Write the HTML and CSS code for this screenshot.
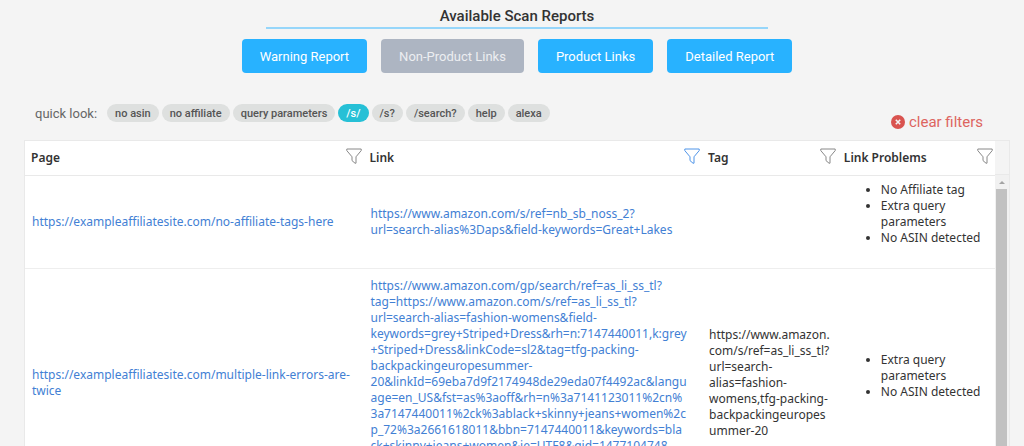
FILE: index.html
```html
<!DOCTYPE html>
<html lang="en">
<head>
<meta charset="utf-8">
<title>Available Scan Reports</title>
<meta name="viewport" content="width=device-width, initial-scale=1">
<link rel="stylesheet" href="styles.css">
</head>
<body>
<svg class="sprite" aria-hidden="true">
  <symbol id="funnel" viewBox="0 0 16 16"><path d="M.8 1h14.4v1.6L10 8.8v6.4h-1L6 12.6V8.800L.8 2.600z" fill="none" stroke="currentColor" stroke-linejoin="round"/></symbol>
</svg>
<main class="page">
  <h1 class="title">Available Scan Reports</h1>
  <nav class="reports" aria-label="Reports">
    <button class="report" type="button">Warning Report</button>
    <button class="report report-muted" type="button">Non-Product Links</button>
    <button class="report" type="button">Product Links</button>
    <button class="report" type="button">Detailed Report</button>
  </nav>
  <div class="toolbar">
    <div class="quick">
      <span class="quick-label">quick look:</span>
      <button class="chip" type="button">no asin</button>
      <button class="chip" type="button">no affiliate</button>
      <button class="chip" type="button">query parameters</button>
      <button class="chip chip-active" type="button">/s/</button>
      <button class="chip" type="button">/s?</button>
      <button class="chip" type="button">/search?</button>
      <button class="chip" type="button">help</button>
      <button class="chip" type="button">alexa</button>
    </div>
    <button class="clear" type="button">
      <svg class="clear-icon" viewBox="0 0 14 14" aria-hidden="true"><circle cx="7" cy="7" r="7" fill="#d9534f"/><path d="M4.800 4.800l4.400 4.400M9.200 4.800L4.800 9.200" stroke="#f4f4f4" stroke-width="1.600"/></svg>
      clear filters
    </button>
  </div>
  <div class="grid">
    <table class="table">
      <colgroup><col class="col-page"><col class="col-link"><col class="col-tag"><col></colgroup>
      <thead>
        <tr>
          <th scope="col"><div class="head"><span>Page</span><button class="filter" type="button" aria-label="Filter Page"><svg class="funnel"><use href="#funnel"/></svg></button></div></th>
          <th scope="col"><div class="head"><span>Link</span><button class="filter filter-on" type="button" aria-label="Filter Link"><svg class="funnel"><use href="#funnel"/></svg></button></div></th>
          <th scope="col"><div class="head"><span>Tag</span><button class="filter" type="button" aria-label="Filter Tag"><svg class="funnel"><use href="#funnel"/></svg></button></div></th>
          <th scope="col"><div class="head"><span>Link Problems</span><button class="filter" type="button" aria-label="Filter Link Problems"><svg class="funnel"><use href="#funnel"/></svg></button></div></th>
        </tr>
      </thead>
      <tbody>
        <tr>
          <td><a href="#">https://exampleaffiliatesite.com/no-affiliate-tags-here</a></td>
          <td><a href="#">https://www.amazon.com/s/ref=nb_sb_noss_2?<br>url=search-alias%3Daps&amp;field-keywords=Great+Lakes</a></td>
          <td></td>
          <td><ul class="problems"><li>No Affiliate tag</li><li>Extra query parameters</li><li>No ASIN detected</li></ul></td>
        </tr>
        <tr class="row-tall">
          <td><a href="#">https://exampleaffiliatesite.com/multiple-link-errors-are-<br>twice</a></td>
          <td class="cell-top"><a href="#">https://www.amazon.com/gp/search/ref=as_li_ss_tl?<br>tag=https://www.amazon.com/s/ref=as_li_ss_tl?<br>url=search-alias=fashion-womens&amp;field-<br>keywords=grey+Striped+Dress&amp;rh=n:7147440011,k:grey<br>+Striped+Dress&amp;linkCode=sl2&amp;tag=tfg-packing-<br>backpackingeuropesummer-<br>20&amp;linkId=69eba7d9f2174948de29eda07f4492ac&amp;langu<br>age=en_US&amp;fst=as%3aoff&amp;rh=n%3a7141123011%2cn%<br>3a7147440011%2ck%3ablack+skinny+jeans+women%2c<br>p_72%3a2661618011&amp;bbn=7147440011&amp;keywords=bla<br>ck+skinny+jeans+women&amp;ie=UTF8&amp;qid=1477104748</a></td>
          <td>https://www.amazon.<br>com/s/ref=as_li_ss_tl?<br>url=search-<br>alias=fashion-<br>womens,tfg-packing-<br>backpackingeuropes<br>ummer-20</td>
          <td><ul class="problems"><li>Extra query parameters</li><li>No ASIN detected</li></ul></td>
        </tr>
      </tbody>
    </table>
    <div class="scroll" aria-hidden="true">
      <div class="scroll-head"></div>
      <div class="scroll-up"></div>
      <div class="scroll-thumb"></div>
    </div>
  </div>
</main>
</body>
</html>
```
FILE: styles.css
```css
* { box-sizing: border-box; }
html, body { height: 100%; }
body {
  margin: 0;
  overflow: hidden;
  background: #f4f4f4;
  color: #333;
  font-family: Roboto, sans-serif;
}
button { border: 0; margin: 0; padding: 0; background: none; font: inherit; color: inherit; cursor: pointer; }
.sprite { display: none; }
.page { padding: 6px 14px 0 24px; }
.title {
  width: 51%;
  margin: 0 auto;
  padding-bottom: 1px;
  border-bottom: 2px solid #96d6fa;
  text-align: center;
  font-size: 15px;
  line-height: 20px;
  font-weight: 500;
}
.reports { display: flex; justify-content: center; gap: 14px; margin-top: 10px; }
.report {
  height: 34px;
  padding: 0 18px;
  border-radius: 4px;
  background: #28b2ff;
  color: #fff;
  font-size: 13px;
}
.report-muted { background: #adb5c2; color: #eceef1; }
.toolbar { display: flex; justify-content: space-between; align-items: flex-start; padding: 31px 27px 0 11px; height: 67px; }
.quick { display: flex; align-items: center; gap: 3px; }
.quick-label { margin-right: 7px; color: #666; font-size: 13px; }
.chip {
  height: 18px;
  padding: 0 8px;
  border-radius: 9px;
  background: #dee0df;
  color: #555;
  font-size: 11px;
  font-weight: 500;
}
.chip-active { background: #26c0d6; color: #fff; }
.clear { display: flex; align-items: center; gap: 4px; margin-top: 8px; color: #dd6460; font-size: 15px; line-height: 20px; }
.clear-icon { width: 14px; height: 14px; }
.grid { display: flex; border: 1px solid #e9e9e9; background: #fff; }
.table {
  flex: 1;
  min-width: 0;
  table-layout: fixed;
  border-collapse: collapse;
  font-family: "Noto Sans", "Open Sans", sans-serif;
  font-size: 12px;
  line-height: 16px;
}
.col-page, .col-link { width: 34.9%; }
.col-tag { width: 14%; }
th { height: 34px; padding: 0 2px 0 6px; border-bottom: 1px solid #e9e9e9; text-align: left; font-weight: 600; }
.head { display: flex; justify-content: space-between; align-items: center; white-space: nowrap; }
.filter { display: flex; margin-bottom: 4px; color: #888; }
.filter-on { color: #4f94e8; }
.funnel { width: 16px; height: 16px; }
td { height: 93px; padding: 6px 7px; border-bottom: 1px solid #eee; vertical-align: middle; white-space: nowrap; }
.row-tall td { height: 230px; }
.row-tall .cell-top { padding-top: 9px; vertical-align: top; }
td a { color: #4280d4; text-decoration: none; }
.problems { margin: 0 0 15px; padding-left: 36px; white-space: normal; }
.scroll { display: flex; flex-direction: column; width: 14px; background: #f1f1f1; }
.scroll-head { height: 34px; border-bottom: 1px solid #e9e9e9; background: #f4f4f4; }
.scroll-up {
  width: 6px;
  height: 3px;
  margin: 6px auto 5px 4px;
  background: #a3a3a3;
  clip-path: polygon(50% 0, 100% 100%, 0 100%);
}
.scroll-thumb { flex: 1; margin: 0 2px 0 1px; background: #c1c1c1; }
```
